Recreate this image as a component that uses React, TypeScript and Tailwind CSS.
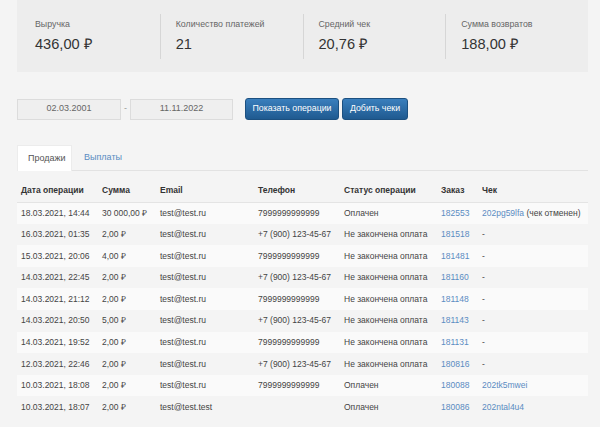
import React from 'react';

type Row = {
  date: string;
  sum: string;
  email: string;
  phone: string;
  status: string;
  order: string;
  check?: string;
  note?: string;
};

const STATS = [
  { label: 'Выручка', value: '436,00 ₽' },
  { label: 'Количество платежей', value: '21' },
  { label: 'Средний чек', value: '20,76 ₽' },
  { label: 'Сумма возвратов', value: '188,00 ₽' },
];

const ROWS: Row[] = [
  { date: '18.03.2021, 14:44', sum: '30 000,00 ₽', email: 'test@test.ru', phone: '7999999999999', status: 'Оплачен', order: '182553', check: '202pg59lfa', note: '(чек отменен)' },
  { date: '16.03.2021, 01:35', sum: '2,00 ₽', email: 'test@test.ru', phone: '+7 (900) 123-45-67', status: 'Не закончена оплата', order: '181518' },
  { date: '15.03.2021, 20:06', sum: '4,00 ₽', email: 'test@test.ru', phone: '7999999999999', status: 'Не закончена оплата', order: '181481' },
  { date: '14.03.2021, 22:45', sum: '2,00 ₽', email: 'test@test.ru', phone: '+7 (900) 123-45-67', status: 'Не закончена оплата', order: '181160' },
  { date: '14.03.2021, 21:12', sum: '2,00 ₽', email: 'test@test.ru', phone: '7999999999999', status: 'Не закончена оплата', order: '181148' },
  { date: '14.03.2021, 20:50', sum: '5,00 ₽', email: 'test@test.ru', phone: '+7 (900) 123-45-67', status: 'Не закончена оплата', order: '181143' },
  { date: '14.03.2021, 19:52', sum: '2,00 ₽', email: 'test@test.ru', phone: '7999999999999', status: 'Не закончена оплата', order: '181131' },
  { date: '12.03.2021, 22:46', sum: '2,00 ₽', email: 'test@test.ru', phone: '+7 (900) 123-45-67', status: 'Не закончена оплата', order: '180816' },
  { date: '10.03.2021, 18:08', sum: '2,00 ₽', email: 'test@test.ru', phone: '7999999999999', status: 'Оплачен', order: '180088', check: '202tk5mwei' },
  { date: '10.03.2021, 18:07', sum: '2,00 ₽', email: 'test@test.test', phone: '', status: 'Оплачен', order: '180086', check: '202ntal4u4' },
];

const App: React.FC = () => {
  return (
    <div className="w-[600px] h-[427px] overflow-hidden bg-[#f4f4f4] text-[#444] font-['Liberation_Sans',Arial,sans-serif]">
      <div className="pl-[17px] w-[588px]">
        {/* Stats */}
        <div className="h-[72px] bg-[#ededed] grid grid-cols-4 items-center">
          {STATS.map((s, i) => (
            <div
              key={s.label}
              className={`h-[45px] flex flex-col justify-center ${i === 0 ? 'pl-[18px]' : 'pl-[15px] border-l border-[#d6d6d6]'}`}
            >
              <p className="text-[8.8px] text-[#666] leading-none">{s.label}</p>
              <p className="text-[14.6px] text-[#333] leading-none mt-[8px]">{s.value}</p>
            </div>
          ))}
        </div>

        {/* Filters */}
        <div className="flex items-center mt-[26px] h-[22px]">
          <div className="w-[104px] h-[21px] bg-[#efefef] border border-[#dcdcdc] flex items-center justify-center text-[9px] text-[#666]">02.03.2001</div>
          <span className="w-[9px] text-center text-[9px] text-[#999]">-</span>
          <div className="w-[103px] h-[21px] bg-[#efefef] border border-[#dcdcdc] flex items-center justify-center text-[9px] text-[#666]">11.11.2022</div>
          <button className="ml-[12px] w-[94px] h-[22px] rounded-[3px] bg-gradient-to-b from-[#3a7fbd] to-[#1f5a90] border border-[#1c5080] text-white text-[8.8px]">
            Показать операции
          </button>
          <button className="ml-[3px] w-[66px] h-[22px] rounded-[3px] bg-gradient-to-b from-[#3a7fbd] to-[#1f5a90] border border-[#1c5080] text-white text-[8.8px]">
            Добить чеки
          </button>
        </div>

        {/* Tabs */}
        <div className="flex mt-[25px] h-[26px] border-b border-[#e2e2e2] text-[9px]">
          <div className="w-[55px] h-[26px] bg-white border border-b-0 border-[#ececec] flex items-center pl-[10px] text-[#555]">Продажи</div>
          <div className="h-[25px] flex items-center pl-[12px] text-[#5a8cc2]">Выплаты</div>
        </div>

        {/* Table */}
        <table className="w-[571px] mt-[9px] text-[8.5px] border-collapse table-fixed">
          <thead>
            <tr className="h-[22px] border-b border-[#e4e4e4] text-[#333]">
              <th className="w-[81px] text-left font-bold pl-[4px]">Дата операции</th>
              <th className="w-[58px] text-left font-bold pl-[4px]">Сумма</th>
              <th className="w-[98px] text-left font-bold pl-[4px]">Email</th>
              <th className="w-[86px] text-left font-bold pl-[4px]">Телефон</th>
              <th className="w-[97px] text-left font-bold pl-[4px]">Статус операции</th>
              <th className="w-[41px] text-left font-bold pl-[4px]">Заказ</th>
              <th className="text-left font-bold pl-[4px]">Чек</th>
            </tr>
          </thead>
          <tbody>
            {ROWS.map((r, i) => (
              <tr key={r.order} className={`h-[21.6px] ${i % 2 === 0 ? 'bg-[#fafafa]' : ''}`}>
                <td className="pl-[4px] whitespace-nowrap">{r.date}</td>
                <td className="pl-[4px] whitespace-nowrap">{r.sum}</td>
                <td className="pl-[4px] whitespace-nowrap">{r.email}</td>
                <td className="pl-[4px] whitespace-nowrap">{r.phone}</td>
                <td className="pl-[4px] whitespace-nowrap">{r.status}</td>
                <td className="pl-[4px] whitespace-nowrap text-[#5a8cc2]">{r.order}</td>
                <td className="pl-[4px] whitespace-nowrap">
                  {r.check ? (
                    <>
                      <span className="text-[#5a8cc2]">{r.check}</span>
                      {r.note && <span> {r.note}</span>}
                    </>
                  ) : (
                    '-'
                  )}
                </td>
              </tr>
            ))}
          </tbody>
        </table>
      </div>
    </div>
  );
};

export default App;
